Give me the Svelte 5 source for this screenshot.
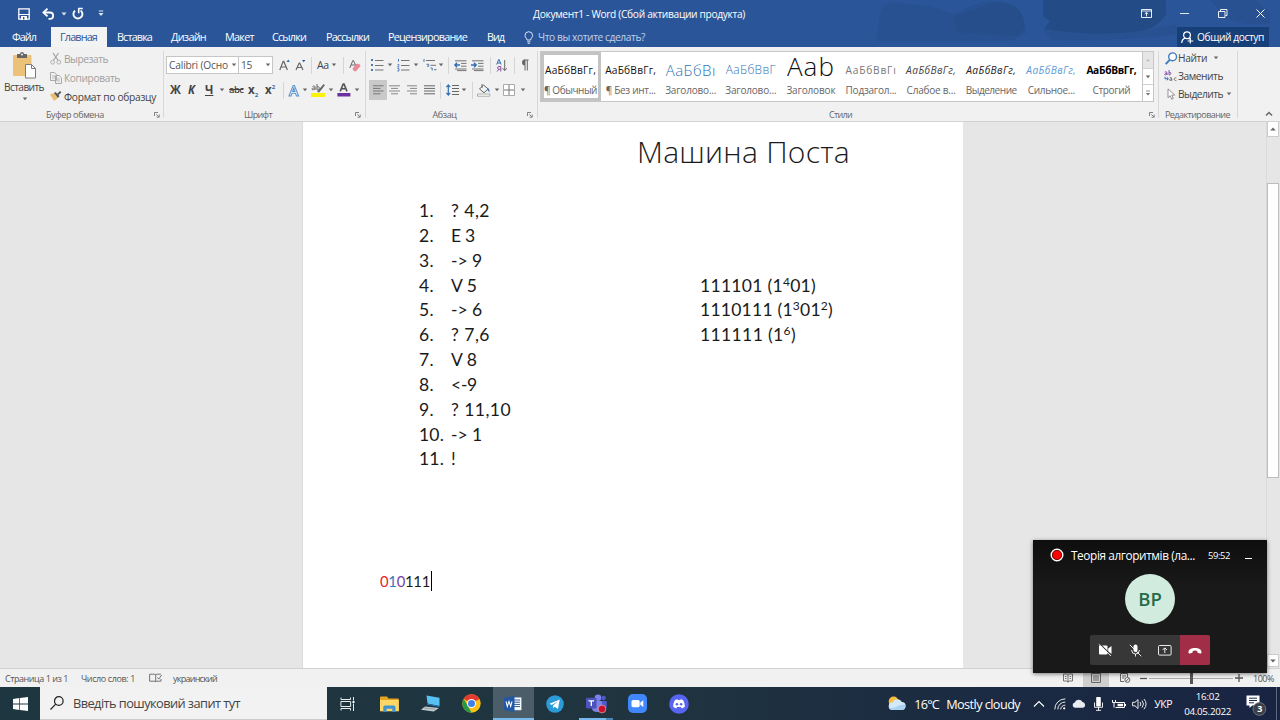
<script>
  // Inner SVG markup, keyed by name: [width, height, content]
  const G = 'fill="none" stroke="#666"';
  const W = 'fill="none" stroke="#fff"';
  const icons = {
    save: [12, 12, `<path d="M.8.8h10.4v10.4H.8z" ${W} stroke-width="1.3"/><path d="M1 6.5h10" stroke="#fff"/><path d="M3 8h6v4H3z" fill="#fff"/><path d="M5 9h1.4v2.4H5z" fill="#2b579a"/>`],
    undo: [13, 12, `<path d="M2 4.5h6a3 3 0 0 1 0 6.3H6.5" ${W} stroke-width="1.8"/><path d="M5.5.6 1.4 4.5l4.1 3.9" ${W} stroke-width="1.8"/>`],
    redo: [12, 12, `<path d="M3 2.6A4.5 4.5 0 1 0 8.6 2.4" ${W} stroke-width="1.9"/><path d="M6.2.5h4.6M6.7.6v4.6" ${W} stroke-width="1.6"/>`],
    dropW: [6, 4, `<path d="M.5.5h5L3 3.5z" fill="#dfe7f4"/>`],
    custW: [6, 7, `<path d="M.8 1h4.4" stroke="#dfe7f4"/><path d="M.5 3h5L3 6z" fill="#dfe7f4"/>`],
    ribbonOpt: [11, 9, `<path d="M.5.5h10v8H.5zM.5 2h10M5.5 7.5v-4M3.7 5l1.8-1.7L7.3 5" ${W} stroke-width=".9"/>`],
    min: [9, 9, `<path d="M0 4.5h9" stroke="#dfe7f4"/>`],
    restore: [10, 9, `<path d="M.5 2.5H7v6H.5zM2.5 2V.5H9v6H7.5" ${W} stroke-width=".9"/>`],
    close: [9, 9, `<path d="m.5.5 8 8m0-8-8 8" ${W}/>`],
    bulb: [10, 13, `<path d="M3 9C3 7.3 1 6.7 1 4.5a3.8 3.8 0 0 1 7.6 0C8.6 6.7 6.6 7.3 6.6 9zM3.2 10.8h3.2M3.7 12.3h2.2" fill="none" stroke="#dbe4f3"/>`],
    person: [13, 13, `<circle cx="6" cy="4.2" r="3.4" ${W} stroke-width="1.2"/><path d="M.7 12c.2-2.8 1.6-4.3 3.6-4.8M7.5 7.4l1 .8M9.3 7v5.4M6.6 10h5.7" ${W} stroke-width="1.2"/>`],
    paste: [24, 27, `<rect x="0" y="3" width="18.5" height="21" rx="1" fill="#ecc279"/><path d="M4 2h3a2 2 0 0 1 4 0h3v4H4z" fill="#666"/><circle cx="9" cy="2.4" r="1" fill="#f1f1f1"/><path d="M12.5 12.5h6l4 4V26h-10z" fill="#fff" stroke="#7a7a7a"/><path d="M18.5 12.5v4h4" fill="none" stroke="#7a7a7a"/>`],
    drop: [6, 4, `<path d="M.8.5h4.4L3 3.2z" fill="#666"/>`],
    cut: [12, 12, `<path d="m3 0 5.2 7.5M8.5 0 3.4 7.5" fill="none" stroke="#a3a3a3" stroke-width="1.2"/><circle cx="2.6" cy="9.2" r="1.9" fill="none" stroke="#b0b0b0"/><circle cx="8.8" cy="9.2" r="1.9" fill="none" stroke="#b0b0b0"/>`],
    copy: [12, 12, `<path d="M.5.5h4l2 2v6h-6zM5.5 3.5h3.6l2.4 2.4v5.6h-6z" fill="#f1f1f1" stroke="#aaa"/><path d="M2 4h3M2 6h3M7 7h3M7 9h3" stroke="#bbb"/>`],
    brush: [12, 11, `<path d="M0 3.5 4 2l4 5-4 3z" fill="#ecbd70"/><path d="m4 2 1.5-1 4 4L8 7z" fill="#555"/><path d="m7 3 3-3 1.4 1.3L8.6 4z" fill="#555"/>`],
    growA: [12, 12, `<path d="M.8 11 4.2 2.4h.6L8.4 11M2 8h5" ${G} stroke-width="1.2"/><path d="M7.5 3 9.2.4 10.900 3z" fill="#2b6fb5"/>`],
    shrinkA: [12, 12, `<path d="m1 11 3.2-7h.5L8 11M2.2 8.5h4.5" ${G} stroke-width="1.2"/><path d="M7 1h3.4L8.700 3.300z" fill="#2b579a"/>`],
    eraser: [12, 13, `<path d="M.8 9 3.8 1.500h.6L7 7M2 6h4" ${G}/><path d="m3.500 9.400 4.300-4.600c2.300-.2 3.200.6 3.700 2.200L7 12.200c-1.700.3-2.800-.4-3.500-2.800z" fill="#ea8799"/>`],
    textFx: [12, 13, `<path d="M1 12 5.200 1.500h1.200L10.600 12H8.500L7.500 9.300H4L3 12zM4.600 7.400h2.300L5.800 4.200z" fill="#fff" stroke="#5b93cf" stroke-width="1.1"/>`],
    marker: [15, 14, `<path d="M0 10h14v4H0z" fill="#fdf300"/><path d="M6 8.800 12.600 1l1.300 1.200-5.700 7.200z" fill="#666"/><path d="M1.500 3.300c2.700-1 2.700.4 2.700 3.400M4.200 5C1.300 4.800 1 5.500 1 6.200s1.700.8 3.200-.4M6 1v6m0-3c3-1.500 3.200 3 0 3" ${G}/>`],
    fontColor: [14, 14, `<path d="m3.200 8.400 3-7.400H7l3 7.400M4.300 5.800h4.500" fill="none" stroke="#555" stroke-width="1.6"/><path d="M.4 10h13v3.500H.4z" fill="#6b2fa0"/>`],
    bullets: [13, 12, `<path d="M0 0h2v2H0zM0 5h2v2H0zM0 10h2v2H0z" fill="#4a79b8"/><path d="M4 1.500h8.500M4 6.500h8.500M4 11h8.500" ${G} stroke-width=".9"/>`],
    numbers: [13, 12, `<path d="M1.500 0v2.600M.5 5.400h1.300v1.300L.5 8h1.700M.5 9.600h1.400V12H.4" fill="none" stroke="#4a79b8"/><path d="M4 1.500h8.500M4 6.500h8.500M4 11h8.500" ${G} stroke-width=".9"/>`],
    multi: [14, 12, `<path d="M1 0v3M3.500 5.300h2.200v2H4M7.500 9h1.700v2.600" fill="none" stroke="#4a79b8"/><path d="M3 1.500h9M7.500 6.300H13M11 10.700h2.500" ${G} stroke-width=".9"/>`],
    outdent: [13, 11, `<path d="M1 .8h11.500M7 3.400h5.500M7 6.200h5.500M1 9h11.500M3 10.600h9.500" ${G} stroke-width=".9"/><path d="M6 5H1.200M3 2.800.9 5 3 7.200" fill="none" stroke="#2f6eb5" stroke-width="1.4"/>`],
    indent: [13, 11, `<path d="M1 .8h11.500M7 3.400h5.500M7 6.200h5.500M1 9h11.500M3 10.600h9.500" ${G} stroke-width=".9"/><path d="M0 5h5M3 2.800 5.200 5 3 7.200" fill="none" stroke="#2f6eb5" stroke-width="1.4"/>`],
    sort: [12, 13, `<path d="m.7 5.500 2-5h.4l2 5M1.400 4h3" fill="none" stroke="#2f6eb5"/><path d="M4.800 12.500v-5H3a1.400 1.400 0 0 0 0 2.800h1.800M2.800 10.300 1 12.500" fill="none" stroke="#8d4aa8"/><path d="M8.700 1v10.500M6.600 9.200l2.100 2.400 2.100-2.400" ${G}/>`],
    pilcrow: [9, 12, `<path d="M5 1v10.500M7.300 1v10.500M8.600 1H4" ${G}/><path d="M5 .6a3 3 0 0 0 0 6z" fill="#666"/>`],
    alignL: [11, 10, `<path d="M0 .8h10.500M0 3.400h7.500M0 6h10.500M0 8.800h7.500" stroke="#777"/>`],
    alignC: [11, 10, `<path d="M0 .8h11M2 3.400h7M0 6h11M2 8.800h7" stroke="#888"/>`],
    alignR: [11, 10, `<path d="M0 .8h10M3 3.400h7M0 6h10M3 8.800h7" stroke="#888"/>`],
    alignJ: [11, 10, `<path d="M0 .8h11M0 3.400h11M0 6h11M0 8.800h11" stroke="#666"/>`],
    spacing: [13, 12, `<path d="M6 1.500h7M6 4.500h7M6 7.500h7M6 10.500h7" ${G}/><path d="M2.300 1v10M.4 3.200 2.300 1l1.900 2.200M.4 8.800l1.900 2.200 1.900-2.200" fill="none" stroke="#2f6eb5" stroke-width="1.2"/>`],
    bucket: [14, 14, `<path d="m2.500 6 4-4 4.700 4-4.200 3.800zM5 1v4" ${G}/><path d="M10.500 5c2 1 2.200 2.400 1.800 4.500L10.800 7z" fill="#2f6eb5"/><path d="M.5 11h12.300v2.200H.5z" fill="#fff" stroke="#999" stroke-width=".8"/>`],
    borders: [12, 12, `<path d="M.5.5h11v11H.5z" fill="#fff" stroke="#aaa"/><path d="M6 1v10M1 6h10" stroke="#777"/>`],
    launcher: [6, 6, `<path d="M.5 4V.5H4M2.300 2.300l2.400 2.400M5.200 2.500v2.700H2.500" ${G} stroke-width=".8"/>`],
    upG: [6, 4, `<path d="M1 3.200h4L3 1z" fill="#bbb"/>`],
    moreG: [6, 7, `<path d="M1 1h4" stroke="#777" stroke-width=".8"/><path d="M.8 3h4.400L3 5.600z" fill="#777"/>`],
    find: [13, 13, `<circle cx="7.6" cy="4.8" r="3.9" fill="#fff" stroke="#3f7cbf" stroke-width="1.4"/><path d="m4.700 7.900-4 4.200" stroke="#3f7cbf" stroke-width="2"/>`],
    replace: [14, 12, `<path d="M.7 2c2.400-.6 2.400.2 2.400 3M3 3.400C1 3.400.7 3.800.7 4.400S2 5 3 4.300M5 0v5m0-2.700c2.500-.8 2.500 2.700 0 2.700" fill="none" stroke="#8148a5" stroke-width=".9"/><path d="M1 6.800v2h3M2.800 7.300 4.400 8.800 2.800 10.300" fill="none" stroke="#2f6eb5"/><path d="M5.800 7.500c2-.4 2 .6 2 3.200M7.800 9c-2 0-2.300.4-2.300.9s1.300.9 2.300 0M12.400 8c-3-.9-3 3 0 2.400" ${G} stroke-width=".9"/>`],
    select: [9, 12, `<path d="M1 .9v8.800l2.200-2 1.500 3.500 1.600-.7-1.500-3.300 2.900-.2z" fill="#fff" stroke="#777" stroke-width=".8"/>`],
    collapse: [8, 6, `<path d="m1 4.500 3-3 3 3" ${G} stroke-width="1.5"/>`],
    sbUp: [6, 4, `<path d="M.2 3.500h5.600L3 .5z" fill="#666"/>`],
    sbDown: [6, 4, `<path d="M.2.5h5.600L3 3.500z" fill="#666"/>`],
    proof: [13, 10, `<path d="M6 1.200H.6v7H6c.4 0 .7.6.7.6V2s-.3-.8-.7-.8zM6.700 2s.4-.8 1-.8h4.200M6.700 8.800s.4-.6 1-.6H12V6M8.500 4.500l1.300 1.600L12.600 2" ${G} stroke-width=".9"/>`],
    readMode: [10, 10, `<path d="M.5 1h3.700l.8.7.8-.7h3.700v7H5.800L5 9l-.8-1H.5zM5 1.700V9.500M2 3.500h1.500M2 5.500h1.500M6.600 3.500h1.500M6.600 5.500h1.500" ${G} stroke-width=".9"/>`],
    pageMode: [10, 10, `<path d="M.5.5h9v9h-9zM2 3h6M2 5h6M2 7h6" ${G}/>`],
    webMode: [11, 10, `<path d="M4 8.500H.5v-8h7V4M2 3h4M2 5h2.500" ${G}/><circle cx="7.4" cy="6.9" r="2.5" ${G}/><path d="m5.600 8.700 3.500-3.600" ${G}/>`],
    minus: [7, 3, `<path d="M0 1.500h7" stroke="#555" stroke-width="1.3"/>`],
    plus: [8, 8, `<path d="M0 4h8M4 0v8" stroke="#555" stroke-width="1.3"/>`],
    windows: [15, 14, `<path d="M0 2 6.300 1.100v5.500H0zM7 1l8-1v6.600H7zM0 7.400h6.300v5.500L0 12zM7 7.400h8V14l-8-1z" fill="#fff"/>`],
    search: [14, 14, `<circle cx="8.8" cy="5" r="4.3" fill="none" stroke="#222" stroke-width="1.2"/><path d="m5.700 8.200-5.200 5.300" stroke="#222" stroke-width="1.2"/>`],
    taskview: [15, 14, `<path d="M1 .5v2h9.500v-2M1 13.500v-2h9.500v2M.9 4.500h9.700v5H.9zM13.500 0v3.500M13.500 6.500V14" ${W} stroke-width=".9"/><path d="M12.500 4h2v2h-2z" fill="#fff"/>`],
    explorer: [19, 16, `<path d="M0 1.500Q0 .5 1 .5h6l1.500 2H18q.8 0 .8.8V15H0z" fill="#e5a51f"/><path d="M0 4h18.800v11.300H0z" fill="#fcd667"/><path d="M3.300 16v-5q0-1.600 1.600-1.600h9q1.600 0 1.600 1.600v5h-3.200v-3.200H6.500V16z" fill="#3f94cf"/>`],
    pc: [20, 17, `<path d="m5.500.5 13 2.300V11L6.500 8.600z" fill="#59c0f4"/><path d="m6 8.700 12.500 2.300v1L6 9.800z" fill="#2377b5"/><path d="M4 11.500 17.800 13l-5 3.500L0 14.800z" fill="#c4cbd0"/><path d="m3 13 11 1.300" stroke="#7d8990" stroke-width=".7"/>`],
    chrome: [19, 19, `<circle cx="9.5" cy="9.5" r="9.2" fill="#fbc116"/><path d="M9.500 9.500 1.600 4.800A9.200 9.200 0 0 1 17.500 5z" fill="#e33b2e"/><path d="M1.600 4.800 6 12.200l3.600 6.500A9.200 9.200 0 0 1 1.600 4.800z" fill="#279847"/><circle cx="9.5" cy="9.5" r="4.5" fill="#fff"/><circle cx="9.5" cy="9.5" r="3.5" fill="#3f7fe8"/>`],
    word: [18, 16, `<path d="M8 1.500h9.300v12.600H8z" fill="#fff" stroke="#9bb4dc" stroke-width=".5"/><path d="M10 4h6M10 6.200h6M10 8.400h6M10 10.600h6" stroke="#2b579a"/><path d="m0 1.800 10.500-1.800v16L0 14z" fill="#2257a5"/><path d="m2 5.400 1.300 5 1.700-5 1.700 5L8 5.400" ${W} stroke-width="1.1"/>`],
    telegram: [18, 18, `<circle cx="9" cy="9" r="8.8" fill="#2a9bd7"/><path d="m3.500 8.800 10.300-4.200-1.900 9.400-3-2.200-1.600 1.500-.2-2.900L12 6.300l-6.300 3.600z" fill="#fff"/>`],
    teams: [21, 19, `<circle cx="12" cy="3.8" r="3.3" fill="#7b83eb"/><circle cx="17.6" cy="4" r="2.2" fill="#5059c9"/><path d="M14 7h6q.8 0 .8.8V12q0 4-4 4z" fill="#5059c9"/><path d="M6 7h10v7q0 4-5 4t-5-4z" fill="#7b83eb"/><rect x="0" y="3.8" width="10.5" height="10.7" rx="1" fill="#4b53bc"/><path d="M2.500 6.800h5.600M5.300 7v5" ${W} stroke-width="1.3"/><circle cx="16" cy="15" r="3.9" fill="#c4122f" stroke="#e9c7d0" stroke-width=".6"/>`],
    zoom: [19, 19, `<rect width="19" height="19" rx="5" fill="#4087fc"/><rect x="3.5" y="6" width="8.2" height="7.2" rx="1.6" fill="#fff"/><path d="m12.300 8.500 3-2.200v6.600l-3-2.200z" fill="#fff"/>`],
    discord: [20, 20, `<circle cx="10" cy="10" r="9.8" fill="#5865f2"/><path d="M4.200 12.800c0-2.800.7-5 1.700-6.600q1.400-.8 2.500-.9l.4.8h2.400l.4-.8q1.200.1 2.500.9c1.100 1.700 1.800 3.800 1.700 6.600q-1.400 1.200-3 1.600l-.8-1.400H8l-.8 1.400q-1.700-.4-3-1.600z" fill="#fff"/><circle cx="7.9" cy="10.2" r="1.3" fill="#5865f2"/><circle cx="12.1" cy="10.2" r="1.3" fill="#5865f2"/>`],
    weather: [18, 15, `<circle cx="5.6" cy="5.4" r="4.9" fill="#f8bd3d"/><path d="M4.500 14a3.900 3.900 0 0 1 .2-7.800 4.900 4.900 0 0 1 9-.2 4 4 0 0 1-.2 8z" fill="#d3e9f8"/><path d="M4.500 14a3.900 3.900 0 0 1-3.700-3q4 2 8-.5t8.600-2q.3 5-3.900 5.500z" fill="#a9d3f0"/>`],
    chevron: [12, 8, `<path d="m1 6.500 5-5 5 5" ${W} stroke-width="1.1"/>`],
    wifi: [12, 12, `<path d="M.8 11.400A10.300 10.300 0 0 1 11.300.9M3.800 11.400a7.200 7.200 0 0 1 7.500-7.300M6.700 11.400a4.300 4.300 0 0 1 4.600-4.200" ${W} stroke-width=".9"/><circle cx="10.2" cy="10.3" r="1.1" fill="#fff"/>`],
    cloud: [14, 9, `<path d="M3 8.800a2.700 2.700 0 0 1-.3-5.300 4.300 4.300 0 0 1 7.800-.5 3 3 0 0 1 .6 5.800z" fill="#e9edf2"/>`],
    mic: [9, 14, `<rect x="2.2" width="4.6" height="9.5" rx=".8" fill="#fff"/><path d="M.5 5.500v4.800h8V5.500M4.500 10v3.500M2 13.300h5" ${W} stroke-width=".9"/>`],
    battery: [14, 10, `<path d="M4 3.500h8.500v5H3.500M13.500 5v2" ${W}/><path d="M5.500 4.800h5.600v2.500H5.500z" fill="#fff"/><path d="M.5 1v2.500h3V1M2 3.500v5" ${W}/>`],
    volume: [15, 12, `<path d="M.6 4.300H3L6 1.600v9L3 7.800H.6zM8 4q1.600 2 0 4.200M10 2.600q3 3.400 0 7M12 1q4.200 5 0 10.200" ${W} stroke-width=".9"/>`],
    notes: [21, 20, `<path d="M.5 1.500h13v10H6.300L3.500 14v-2.500h-3z" fill="#fff"/><path d="M3 4.200h8M3 6.500h8M3 8.800h5" stroke="#1a2744"/><circle cx="13.4" cy="15" r="6.4" fill="#3b3f47" stroke="#7b7f86" stroke-width=".8"/>`],
    rec: [14, 14, `<circle cx="7" cy="7" r="5.8" fill="#f00" stroke="#fff" stroke-width="1.4"/><circle cx="7" cy="7" r="4.6" fill="none" stroke="#401010" stroke-width=".8"/>`],
    camOff: [15, 12, `<path d="M2 1.500h6.500q1 0 1 1v7q0 1-1 1H2q-1 0-1-1v-7q0-1 1-1zM10.200 4.400 13.500 2v8l-3.300-2.400z" fill="#fff"/><path d="m1.800-.2 12 12" stroke="#3b3a39" stroke-width="1.2"/><path d="M.8.2 13 12" stroke="#fff" stroke-width=".9"/>`],
    micOff: [13, 13, `<rect x="4.5" y=".5" width="4" height="7.5" rx="2" fill="#fff"/><path d="M2.500 6q.4 4 4 4t4-4M6.500 10v2.500M.8.8l11.500 11.500" ${W} stroke-width=".9"/>`],
    share: [14, 11, `<rect x=".5" y=".5" width="12.6" height="9.6" rx="1" ${W} stroke-width=".9"/><path d="M6.800 8V3M4.600 5l2.200-2.200L9 5" ${W} stroke-width=".9"/>`],
    hang: [14, 7, `<path d="M.5 5c0-5.500 13-5.500 13 0 0 1.400-.6 1.600-1.500 1.400l-1.600-.3c-1-.2-1.200-.8-1.100-2.100q-2.300-.8-4.600 0c.1 1.300-.1 1.900-1.100 2.100L2 6.400C1.100 6.600.5 6.400.5 5z" fill="#fff"/>`],
  };

  function fit(node, width) {
    const range = document.createRange();
    range.selectNodeContents(node);
    const natural = range.getBoundingClientRect().width;
    const spacing = (width - natural) / node.textContent.length;
    node.style.letterSpacing = `${spacing.toFixed(3)}px`;
  }

  // Tool strips: [kind, slot width]; "|" is a divider
  const fontTop = [['growA', 16], ['shrinkA', 16], ['|', 6], ['Аа', 14], ['drop', 12], ['|', 6], ['eraser', 12]];
  const fontBottom = [['Ж', 18], ['К', 17], ['Ч', 14], ['drop', 10], ['abc', 19], ['x₂', 17], ['x²', 18], ['|', 5], ['textFx', 14], ['drop', 9], ['marker', 17], ['drop', 9], ['fontColor', 17], ['drop', 6]];
  const paraTop = [['bullets', 16], ['drop', 10], ['numbers', 16], ['drop', 10], ['multi', 15], ['drop', 10], ['|', 6], ['outdent', 17], ['indent', 19], ['|', 6], ['sort', 18], ['|', 6], ['pilcrow', 9]];
  const paraBottom = [['alignC', 18], ['alignR', 17], ['alignJ', 16], ['|', 6], ['spacing', 15], ['drop', 11], ['|', 5], ['bucket', 17], ['drop', 9], ['borders', 17], ['drop', 6]];

  const tabs = [['Вставка', 35, 54], ['Дизайн', 35, 54], ['Макет', 29, 47], ['Ссылки', 34, 54], ['Рассылки', 43, 62], ['Рецензирование', 79, 99], ['Вид', 17, 36]];

  const styles = [
    ['АаБбВвГг,', 'plain', 51, '¶ Обычный', 53], ['АаБбВвГг,', 'plain', 51, '¶ Без инт...', 50],
    ['АаБбВı', 'h1', 50, 'Заголово...', 51], ['АаБбВвГ', 'h2', 50, 'Заголово...', 51],
    ['Ааb', 'big', 48, 'Заголовок', 49], ['АаБбВвГı', 'sub', 51, 'Подзагол...', 51],
    ['АаБбВвГг,', 'weak', 50, 'Слабое в...', 49], ['АаБбВвГг,', 'em', 50, 'Выделение', 51],
    ['АаБбВвГг,', 'strongem', 50, 'Сильное...', 47], ['АаБбВвГг,', 'strong', 50, 'Строгий', 38],
  ];

  const steps = [['? 4,2', 39], ['E 3', 24], ['-> 9', 31], ['V 5', 26], ['-> 6', 31], ['? 7,6', 39], ['V 8', 26], ['<-9', 26], ['? 11,10', 60], ['-> 1', 31], ['!', 5]];
  const apps = ['explorer', 'pc', 'chrome', 'word', 'telegram', 'teams', 'zoom', 'discord'];
</script>

{#snippet icon(name)}
  <svg class="icon" width={icons[name][0]} height={icons[name][1]} viewBox="0 0 {icons[name][0]} {icons[name][1]}">{@html icons[name][2]}</svg>
{/snippet}

{#snippet strip(items)}
  {#each items as [kind, width]}
    <span class="slot" style:width="{width}px">
      {#if kind === '|'}<i class="divider"></i>
      {:else if icons[kind]}{@render icon(kind)}
      {:else if kind === 'Аа'}<span class="case">Аа</span>
      {:else if kind === 'Ж'}<b class="glyph">Ж</b>
      {:else if kind === 'К'}<b class="glyph it">К</b>
      {:else if kind === 'Ч'}<b class="glyph un">Ч</b>
      {:else if kind === 'abc'}<s class="strike">abc</s>
      {:else if kind === 'x₂'}<b class="glyph">x<sub>2</sub></b>
      {:else}<b class="glyph">x<sup>2</sup></b>{/if}
    </span>
  {/each}
{/snippet}

{#snippet caption(text, width)}
  <footer class="caption"><span use:fit={width}>{text}</span></footer>
{/snippet}

<div class="screen">
  <header class="titlebar">
    <svg class="clouds" width="500" height="47" viewBox="0 0 500 47">
      <path opacity=".4" d="M100 14q2-11 14-12l12 2 24 2 24 8 6-2q14-10 32-11 28 0 32 20l2 12-14 8H96z" />
      <path opacity=".5" d="M174 20q6-9 22-10 12-9 28-7 20 4 21 24l-8 9-60-4z" />
      <path d="M263 0h123v14q-8 14-26 17-46 6-96-2l6-8-7-5z" />
      <path opacity=".4" d="M262 30q80 8 134-6l2 10q-60 8-126 6zM430 0h45l15 12v12h-24l-20-6z" />
    </svg>
    <div class="title-row">
      {@render icon('save')}{@render icon('undo')}{@render icon('dropW')}{@render icon('redo')}{@render icon('custW')}
      <span class="doc-name" use:fit={212}>Документ1 - Word (Сбой активации продукта)</span>
      {@render icon('ribbonOpt')}{@render icon('min')}{@render icon('restore')}{@render icon('close')}
    </div>
    <nav class="tabs">
      <span class="file"><span use:fit={24}>Файл</span></span>
      <span class="active"><span use:fit={37}>Главная</span></span>
      {#each tabs as [label, width, slot]}
        <span class="tab" style:width="{slot}px"><span use:fit={width}>{label}</span></span>
      {/each}
      <span class="tell">{@render icon('bulb')}<span use:fit={107}>Что вы хотите сделать?</span></span>
      <span class="share">{@render icon('person')}<span use:fit={67}>Общий доступ</span></span>
    </nav>
  </header>

  <section class="ribbon">
    <div class="group clipboard">
      <div class="body">
        <div class="paste">{@render icon('paste')}<span use:fit={40}>Вставить</span>{@render icon('drop')}</div>
        <div class="clip-list">
          <span class="off">{@render icon('cut')}<span use:fit={44}>Вырезать</span></span>
          <span class="off">{@render icon('copy')}<span use:fit={56}>Копировать</span></span>
          <span>{@render icon('brush')}<span use:fit={92}>Формат по образцу</span></span>
        </div>
      </div>
      {@render caption('Буфер обмена', 58)}
      <i class="launch">{@render icon('launcher')}</i>
    </div>

    <div class="group font">
      <div class="body rows">
        <div class="row">
          <span class="combo name"><span use:fit={59}>Calibri (Осно</span>{@render icon('drop')}</span>
          <span class="combo size"><span use:fit={11}>15</span>{@render icon('drop')}</span>
          {@render strip(fontTop)}
        </div>
        <div class="row second">{@render strip(fontBottom)}</div>
      </div>
      {@render caption('Шрифт', 28)}
      <i class="launch">{@render icon('launcher')}</i>
    </div>

    <div class="group para">
      <div class="body rows">
        <div class="row">{@render strip(paraTop)}</div>
        <div class="row lower"><span class="pressed">{@render icon('alignL')}</span>{@render strip(paraBottom)}</div>
      </div>
      {@render caption('Абзац', 24)}
      <i class="launch">{@render icon('launcher')}</i>
    </div>

    <div class="group stylegroup">
      <div class="body">
        <div class="gallery">
          {#each styles as [sample, look, w, label, lw], i}
            <div class="style" class:selected={i === 0}>
              <div class="sample {look}"><span use:fit={w}>{sample}</span></div>
              <div class="label"><span use:fit={lw}>{label}</span></div>
            </div>
          {/each}
          <div class="scroller">
            <span class="dim">{@render icon('upG')}</span><span>{@render icon('drop')}</span><span>{@render icon('moreG')}</span>
          </div>
        </div>
      </div>
      {@render caption('Стили', 23)}
      <i class="launch">{@render icon('launcher')}</i>
    </div>

    <div class="group editing">
      <div class="body edit-list">
        <span>{@render icon('find')}<span class="lbl" use:fit={29}>Найти</span>{@render icon('drop')}</span>
        <span>{@render icon('replace')}<span class="lbl" use:fit={45}>Заменить</span></span>
        <span>{@render icon('select')}<span class="lbl" use:fit={45}>Выделить</span>{@render icon('drop')}</span>
      </div>
      {@render caption('Редактирование', 65)}
    </div>
    <div class="collapse">{@render icon('collapse')}</div>
  </section>

  <main class="workspace">
    <article class="page">
      <h1><span use:fit={213}>Машина Поста</span></h1>
      <div class="columns">
        <ol>
          {#each steps as [text, width], i}
            <li><span class="num"><span use:fit={i > 8 ? 25 : 15}>{i + 1}.</span></span><span use:fit={width}>{text}</span></li>
          {/each}
        </ol>
        <div class="words">
          <p><span use:fit={116}>111101 (1<sup>4</sup>01)</span></p>
          <p><span use:fit={133}>1110111 (1<sup>3</sup>01<sup>2</sup>)</span></p>
          <p><span use:fit={96}>111111 (1<sup>6</sup>)</span></p>
        </div>
      </div>
      <p class="tape"><span use:fit={50}><span class="red">0</span><span class="blue">1</span><span class="violet">0</span>111</span><i class="caret"></i></p>
    </article>
    <aside class="scrollbar">
      <span class="sb-btn">{@render icon('sbUp')}</span>
      <span class="thumb"></span>
      <span class="sb-btn end">{@render icon('sbDown')}</span>
    </aside>
  </main>

  <div class="status">
    <span class="s1" use:fit={63}>Страница 1 из 1</span>
    <span class="s2" use:fit={54}>Число слов: 1</span>
    <span class="s3">{@render icon('proof')}</span>
    <span class="s4" use:fit={44}>украинский</span>
    <div class="view">
      <span class="v">{@render icon('readMode')}</span>
      <span class="v on">{@render icon('pageMode')}</span>
      <span class="v web">{@render icon('webMode')}</span>
      {@render icon('minus')}
      <span class="track"><i class="knob"></i></span>
      {@render icon('plus')}
      <span class="pct" use:fit={21}>100%</span>
    </div>
  </div>

  <footer class="taskbar">
    <span class="start">{@render icon('windows')}</span>
    <span class="search">{@render icon('search')}<span use:fit={167}>Введіть пошуковий запит тут</span></span>
    <span class="app tv">{@render icon('taskview')}</span>
    {#each apps as app}
      <span class="app {app}">{@render icon(app)}</span>
    {/each}
    <div class="tray">
      {@render icon('weather')}
      <span class="temp"><span use:fit={25}>16°C</span></span><span class="sky"><span use:fit={74}>Mostly cloudy</span></span>
      {@render icon('chevron')}{@render icon('wifi')}{@render icon('cloud')}{@render icon('mic')}{@render icon('battery')}{@render icon('volume')}
      <span class="lang"><span use:fit={18}>УКР</span></span>
      <span class="clock"><span use:fit={24}>16:02</span><span use:fit={47}>04.05.2022</span></span>
      <span class="notes">{@render icon('notes')}<b>3</b></span>
      <i class="peek"></i>
    </div>
  </footer>

  <section class="call">
    <header>
      {@render icon('rec')}<span class="topic" use:fit={124}>Теорія алгоритмів (ла...</span>
      <span class="time"><span use:fit={22}>59:52</span></span><i class="mini"></i>
    </header>
    <div class="avatar"><span>BP</span></div>
    <div class="controls">
      <span>{@render icon('camOff')}</span><span>{@render icon('micOff')}</span><span>{@render icon('share')}</span><span class="end">{@render icon('hang')}</span>
    </div>
  </section>
</div>

<style>
  :global(body) { margin: 0; overflow: hidden; }
  .screen { position: relative; width: 1280px; height: 720px; display: flex; flex-direction: column; overflow: hidden; background: #e6e6e6; font: 10.2px/14px "Open Sans", "Noto Sans", sans-serif; color: #444; white-space: nowrap; }
  .screen * { box-sizing: border-box; }
  .icon { display: block; flex: none; overflow: visible; }

  .titlebar { position: relative; height: 47px; flex: none; background: #2a5699; color: #fff; }
  .clouds { position: absolute; left: 780px; top: 0; fill: #234b85; }
  .title-row { position: relative; height: 27px; padding-left: 18px; display: grid; grid-template-columns: 24px 19px 11px 26px 435px 608px 39px 38px 38px 10px; align-items: center; }
  .doc-name { font-size: 10.2px; padding-top: 1px; }
  .tabs { position: relative; height: 20px; display: flex; align-items: center; font-size: 10.8px; line-height: 20px; }
  .file { width: 51px; padding-left: 12px; }
  .active { width: 56px; height: 20px; padding-left: 9px; margin-right: 10px; background: #f3f3f3; color: #2b579a; }
  .tell { display: flex; align-items: center; gap: 4px; margin-left: 1px; color: #c3d1e8; font-size: 10.2px; }
  .tell, .share { height: 20px; }
  .share { display: flex; align-items: center; gap: 3px; margin-left: auto; margin-right: 11px; width: 92px; padding-left: 4px; background: #174079; font-size: 10.2px; }

  .ribbon { height: 75px; flex: none; display: flex; background: #f1f1f1; border-bottom: 1px solid #d2d2d2; }
  .group { position: relative; display: flex; flex-direction: column; height: 74px; }
  .group::after { content: ''; position: absolute; right: 0; top: 4px; bottom: 3px; width: 1px; background: #d8d8d8; }
  .body { height: 60px; display: flex; }
  .caption { height: 14px; line-height: 16px; text-align: center; font-size: 9px; color: #666; }
  .launch { position: absolute; right: 4px; bottom: 3px; }
  .font .launch, .para .launch { right: 5px; }
  .clipboard { width: 164px; }
  .clipboard .caption { padding-right: 14px; }
  .paste { width: 50px; padding-top: 5px; display: flex; flex-direction: column; align-items: center; }
  .paste > span { line-height: 17px; margin-left: -2px; }
  .paste .icon:last-child { margin-top: 1px; }
  .clip-list { display: flex; flex-direction: column; padding-top: 3px; }
  .clip-list > span { height: 18.7px; display: grid; grid-template-columns: 14px auto; align-items: center; }
  .clip-list .off { color: #a0a0a0; }
  .font { width: 202px; padding-left: 2px; }
  .font .caption { padding-right: 18px; padding-left: 2px; }
  .rows { flex-direction: column; padding-top: 5px; }
  .row { height: 26px; display: flex; align-items: center; }
  .combo { height: 18px; display: flex; align-items: center; justify-content: space-between; background: #fff; border: 1px solid #c6c6c6; padding: 0 1px 0 2px; color: #555; }
  .combo.name { width: 73px; }
  .combo.size { width: 34px; border-left: 0; margin-right: 6px; }
  .second { padding-left: 4px; height: 24px; }
  .lower { height: 24px; }
  .slot { flex: none; display: flex; align-items: center; }
  .divider { width: 1px; height: 17px; background: #d5d5d5; }
  .case { font-size: 10.5px; letter-spacing: -.3px; }
  .glyph { font-size: 11.5px; line-height: 14px; }
  .it { font-style: italic; }
  .un { text-decoration: underline; }
  .glyph sub, .glyph sup { font-size: 6px; line-height: 0; color: #2f6eb5; }
  .strike { font-size: 9.5px; font-weight: 600; letter-spacing: -.6px; }
  .para { width: 172px; padding-left: 5px; }
  .para .caption { padding-right: 20px; }
  .para .lower { margin-left: -2px; }
  .pressed { width: 18px; height: 20px; margin-right: 2px; display: grid; place-items: center; background: #c9c9c9; }
  .stylegroup { width: 621px; padding-left: 2px; }
  .stylegroup .caption { padding-right: 18px; }
  .stylegroup .body { padding-top: 4px; }
  .gallery { width: 614px; height: 51px; display: flex; background: #fff; border: 1px solid #c6c6c6; }
  .style { width: 60.1px; flex: none; height: 49px; display: flex; flex-direction: column; align-items: center; }
  .style.selected { box-shadow: inset 0 0 0 3px #c3c3c3; }
  .sample { height: 30px; padding-top: 6px; line-height: 24px; color: #222; margin-left: -1px; }
  .sample > span, .label > span { display: inline-block; }
  .label { line-height: 17px; color: #666; font-size: 10px; margin-left: -1px; }
  .sample.plain { color: #111; }
  .sample.h1 { font-size: 15px; font-weight: 300; color: #2e74b5; }
  .sample.h2 { font-size: 12px; font-weight: 300; color: #2e74b5; }
  .sample.big { font-size: 26px; line-height: 34px; padding-top: 0; margin-top: -3px; height: 33px; font-weight: 300; color: #111; }
  .sample.sub { color: #777; }
  .weak, .em, .strongem { font-style: italic; }
  .sample.weak { color: #444; }
  .sample.strongem { color: #5b9bd5; }
  .sample.strong { font-weight: 700; color: #000; }
  .scroller { width: 12px; margin-left: auto; display: flex; flex-direction: column; border-left: 1px solid #c6c6c6; }
  .scroller span { flex: 1; display: grid; place-items: center; border-bottom: 1px solid #d0d0d0; }
  .scroller .dim { background: #e6e6e6; }
  .scroller span:last-child { border: 0; }
  .editing { width: 79px; padding-left: 5px; }
  .edit-list { flex-direction: column; padding-top: 2px; }
  .edit-list > span { height: 18px; display: grid; grid-template-columns: 14px 48px auto; align-items: center; }
  .edit-list > span:first-child { grid-template-columns: 14px 35px auto; }
  .edit-list .icon:first-child { justify-self: center; }
  .editing .caption { text-align: left; padding-left: 1px; }
  .collapse { margin-left: auto; padding: 64px 7px 0 0; }

  .workspace { height: 546px; flex: none; display: flex; padding-left: 303px; }
  .page { width: 661px; background: #fff; border-left: 1px solid #dcdcdc; font-family: Lato, "Open Sans", sans-serif; color: #1a1a1a; margin-left: -1px; }
  h1 { margin: 8px 0 0 334px; font: 300 30px/44px "Open Sans", "Noto Sans", sans-serif; }
  .columns { display: flex; margin-top: 24px; padding-left: 116px; font-size: 17.5px; }
  ol { width: 281px; margin: 0; padding: 0; list-style: none; }
  li { display: flex; height: 24.85px; line-height: 25px; }
  .num { width: 32px; }
  .words { padding-top: 74.6px; }
  p { margin: 0; }
  .words p { height: 24.85px; line-height: 25px; }
  .words sup { font-size: 12px; line-height: 0; vertical-align: 6px; }
  .tape { display: flex; align-items: center; height: 20px; margin: 100px 0 0 77px; font-size: 14.8px; }
  .red { color: #e8232a; }
  .blue { color: #2e7cc0; }
  .violet { color: #7a3fa6; }
  .caret { width: 1px; height: 20px; background: #000; margin-left: 1px; }
  .scrollbar { margin-left: auto; width: 14px; display: flex; flex-direction: column; border-left: 1px solid #dadada; }
  .sb-btn { height: 15px; width: 12px; display: grid; place-items: center; background: #fff; border: 1px solid #ccc; border-top: 0; }
  .thumb { margin-top: 46px; height: 295px; width: 12px; background: #fff; border: 1px solid #bdbdbd; }
  .sb-btn.end { margin-top: auto; margin-bottom: 1px; height: 13px; border-top: 1px solid #ccc; }

  .status { height: 19px; flex: none; display: flex; align-items: center; background: #f1f1f1; border-top: 1px solid #d2d2d2; padding-left: 5px; font-size: 9px; line-height: 17px; color: #555; }
  .s1 { width: 76px; }
  .s2 { width: 68px; }
  .s3 { width: 24px; }
  .view { margin-left: auto; height: 100%; width: 222px; display: flex; align-items: center; }
  .v { width: 26px; height: 100%; display: grid; place-items: center; }
  .v:first-child { width: 20px; margin-right: 5px; }
  .v.on { background: #cfcfcf; }
  .v.web { width: 22px; margin: 0 4px 0 5px; }
  .track { width: 84px; height: 11px; margin: 0 2px; display: grid; place-items: center; background: linear-gradient(#aaa, #aaa) center / 100% 1px no-repeat; }
  .knob { width: 3px; height: 11px; background: #555; }
  .pct { margin-left: 10px; }

  .taskbar { height: 33px; flex: none; display: flex; background: linear-gradient(90deg, #1e363f 0, #1f343f 50%, #1b2b42 75%, #192442 100%); color: #fff; }
  .start { width: 40px; display: grid; place-items: center; }
  .search { width: 287px; padding-left: 10px; display: flex; align-items: center; gap: 9px; background: #f2f2f2; border-bottom: 1px solid #ccc; color: #444; font-size: 12.8px; }
  .app { width: 41.4px; display: grid; place-items: center; }
  .app.tv { width: 41.5px; padding-right: 1px; }
  .word { background: #4a5d68; box-shadow: inset 0 -2px #76b9ed; }
  .teams { background: linear-gradient(90deg, #76b9ed 80%, #4c86b5 80%) 4px 100% / 34px 2px no-repeat; }
  .tray { flex: 1; min-width: 0; padding-left: 188.5px; display: grid; grid-template-columns: 26px 32px 87px 21px 18px 22px 18px 20px 22px 25px 67px 30px 1px; align-items: center; font-size: 12px; }
  .temp, .sky { font-size: 12.7px; }
  .lang { font-size: 10.5px; }
  .clock { width: 53px; margin-left: 2px; display: flex; flex-direction: column; align-items: center; gap: 1px; font-size: 9.8px; line-height: 14px; padding-top: 1px; }
  .notes { position: relative; }
  .notes b { position: absolute; left: 11px; top: 9px; font-size: 9px; line-height: 12px; }
  .peek { width: 1px; height: 33px; background: #5d667c; }

  .call { position: absolute; left: 1033px; top: 540px; width: 234px; height: 133px; background: linear-gradient(#0e0e0e, #191919 35%); color: #fff; box-shadow: 0 1px 4px rgba(0, 0, 0, .5); }
  .call header { height: 30px; display: flex; align-items: center; padding-left: 17px; font-size: 11.8px; }
  .topic { width: 137px; margin-left: 7px; }
  .time { width: 37px; font-size: 9.4px; line-height: 16px; padding-top: 1px; }
  .mini { width: 7px; height: 1px; margin-top: 6px; background: #fff; }
  .avatar { width: 50px; height: 50px; margin: 4px 0 0 92px; border-radius: 50%; background: #d1ebdf; display: grid; place-items: center; color: #256b48; font-size: 18.5px; font-weight: 600; }
  .controls { display: flex; width: 120px; height: 30px; margin: 11px 0 0 57px; border-radius: 2px; overflow: hidden; background: #373737; }
  .controls span { flex: 1; display: grid; place-items: center; }
  .controls .end { background: #a12e46; }
</style>
